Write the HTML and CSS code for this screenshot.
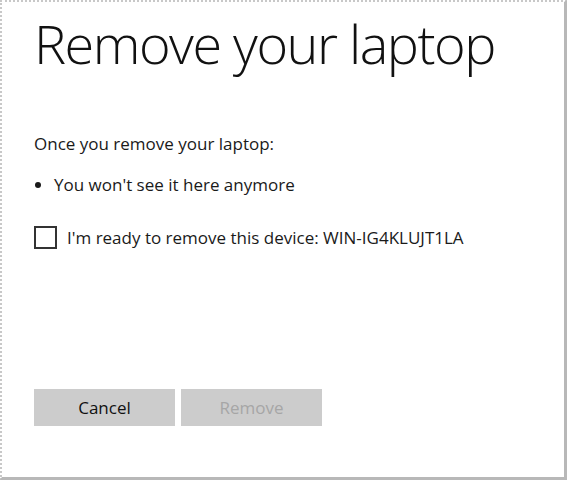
FILE: index.html
```html
<!DOCTYPE html>
<html lang="en">
<head>
  <meta charset="UTF-8" />
  <title>Remove your laptop</title>
  <link rel="stylesheet" href="styles.css">
</head>
<body>
  <div class="dialog">
    <h1>Remove your laptop</h1>
    <p class="intro">Once you remove your laptop:</p>
    <ul class="effects">
      <li>You won't see it here anymore</li>
    </ul>
    <label class="confirm">
      <span class="box"></span>
      <span>I'm ready to remove this device: WIN-IG4KLUJT1LA</span>
    </label>
    <div class="actions">
      <button class="btn">Cancel</button>
      <button class="btn" disabled>Remove</button>
    </div>
  </div>
</body>
</html>
```

FILE: styles.css
```css
html, body { margin: 0; height: 100%; }
body { font-family: "Open Sans", "Noto Sans", sans-serif; color: #1a1a1a; background: #fff; }
.dialog { box-sizing: border-box; height: 480px; width: 567px; padding: 6px 32px 0 32px; border-top: 2px dotted #c8c8c8; border-left: 2px dotted #c8c8c8; border-right: 3px solid #b8b8b8; border-bottom: 3px solid #b8b8b8; }
h1 { margin: 0; font-weight: 300; font-size: 54px; line-height: 70px; letter-spacing: -1.5px; color: #111; }
.intro { margin: 56px 0 0; font-size: 17px; line-height: 20px; }
.effects { margin: 21px 0 0; padding: 0 0 0 20px; font-size: 17px; line-height: 20px; }
.confirm { display: flex; align-items: center; gap: 10px; margin-top: 31px; font-size: 17px; }
.box { width: 19px; height: 19px; border: 2px solid #333; }
.actions { display: flex; gap: 6px; margin-top: 140px; }
.btn { width: 141px; height: 37px; border: none; background: #ccc; font: inherit; font-size: 17px; color: #111; }
.btn:disabled { color: #a6a6a6; }
```
